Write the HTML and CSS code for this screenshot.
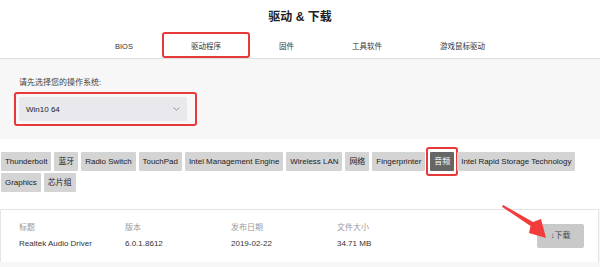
FILE: index.html
```html
<!DOCTYPE html>
<html lang="zh-CN">
<head>
<meta charset="utf-8">
<title>驱动 &amp; 下载</title>
<link rel="stylesheet" href="styles.css">
</head>
<body>
<div class="page">
  <header class="header">
    <h1 class="title">驱动 &amp; 下载</h1>
    <nav class="tabs">
      <span class="tab">BIOS</span>
      <span class="tab tab-active">驱动程序</span>
      <span class="tab">固件</span>
      <span class="tab">工具软件</span>
      <span class="tab">游戏鼠标驱动</span>
    </nav>
  </header>

  <section class="os">
    <div class="os-label">请先选择您的操作系统:</div>
    <div class="os-mark">
      <div class="select">
        <span class="select-value">Win10 64</span>
        <svg class="chev" width="7" height="4" viewBox="0 0 7 4"><polyline points="0.5,0.5 3.5,3.2 6.5,0.5" fill="none" stroke="#8a8a8a" stroke-width="0.9"/></svg>
      </div>
    </div>
  </section>

  <section class="tags">
    <span class="tag">Thunderbolt</span>
    <span class="tag">蓝牙</span>
    <span class="tag">Radio Switch</span>
    <span class="tag">TouchPad</span>
    <span class="tag">Intel Management Engine</span>
    <span class="tag">Wireless LAN</span>
    <span class="tag">网络</span>
    <span class="tag">Fingerprinter</span>
    <span class="tag tag-active">音频</span>
    <span class="tag">Intel Rapid Storage Technology</span>
    <span class="tag">Graphics</span>
    <span class="tag">芯片组</span>
  </section>

  <section class="card">
    <div class="col">
      <div class="lbl">标题</div>
      <div class="val">Realtek Audio Driver</div>
    </div>
    <div class="col">
      <div class="lbl">版本</div>
      <div class="val">6.0.1.8612</div>
    </div>
    <div class="col">
      <div class="lbl">发布日期</div>
      <div class="val">2019-02-22</div>
    </div>
    <div class="col">
      <div class="lbl">文件大小</div>
      <div class="val">34.71 MB</div>
    </div>
    <div class="btn">↓下载</div>
  </section>

  <svg class="arrow" width="50" height="40" viewBox="0 0 50 40">
    <polygon points="1.2,0 31,17 39,14 44,33 27,28 28.5,21 0,1.8" fill="#f23c3c"/>
  </svg>
</div>
</body>
</html>
```

FILE: styles.css
```css
* { box-sizing: border-box; }
html, body { margin: 0; padding: 0; }
body {
  background: #f7f7f7;
  font-family: "Liberation Sans", "Noto Sans CJK SC", sans-serif;
  color: #333;
  width: 600px;
  height: 267px;
  overflow: hidden;
}
.page { position: relative; }

.header {
  background: #fff;
  border-bottom: 1px solid #dedede;
  height: 59px;
}
.title {
  margin: 0;
  height: 32px;
  line-height: 34px;
  text-align: center;
  font-size: 12px;
  font-weight: bold;
  color: #222;
}
.tabs {
  display: flex;
  justify-content: center;
  gap: 0;
}
.tab {
  height: 26px;
  padding: 4px 27px 0;
  line-height: 18px;
  border: 2px solid transparent;
  border-radius: 3px;
  font-size: 7.5px;
  color: #333;
  white-space: nowrap;
}
.tab-active { border-color: #e8393a; }

.os {
  background: #f7f7f7;
  padding: 18px 0 13px 14px;
}
.os-label {
  margin-left: 5px;
  line-height: 12px;
  font-size: 8px;
  color: #444;
}
.os-mark {
  margin-top: 3px;
  width: 183px;
  padding: 3px 8px 3px 3px;
  border: 2px solid #e8393a;
  border-radius: 3px;
}
.select {
  height: 24px;
  background: #e9e9ed;
  border-radius: 2px;
  display: flex;
  align-items: center;
  justify-content: space-between;
  padding: 0 7px 0 7px;
}
.select-value { font-size: 8px; color: #222; }
.chev { display: block; }

.tags {
  background: #fff;
  padding: 13px 0 17px 1px;
  display: flex;
  flex-wrap: wrap;
  gap: 2px 3px;
}
.tag {
  height: 19px;
  line-height: 19px;
  padding: 0 4px;
  background: #d4d4d4;
  border-radius: 1px;
  font-size: 7.95px;
  color: #222;
  white-space: nowrap;
  position: relative;
}
.tag-active {
  background: #666;
  color: #fff;
  margin-left: 2px;
}
.tag-active::after {
  content: "";
  position: absolute;
  left: -4px;
  right: -4px;
  top: -5px;
  bottom: -5px;
  border: 2px solid #e8393a;
  border-radius: 3px;
}

.card {
  background: #fff;
  width: 599px;
  border: 1px solid #e4e4e4;
  border-bottom: none;
  height: 53px;
  display: flex;
  align-items: center;
  padding: 0 14px 0 18px;
}
.col { width: 106px; }
.lbl {
  font-size: 8px;
  line-height: 12px;
  color: #999;
}
.val {
  margin-top: 4px;
  font-size: 8px;
  line-height: 12px;
  color: #333;
}
.btn {
  margin-left: auto;
  width: 47px;
  height: 24px;
  line-height: 24px;
  text-align: center;
  background: #c9c9c9;
  border-radius: 2px;
  font-size: 8px;
  color: #444;
}

.arrow {
  position: absolute;
  left: 502px;
  top: 205px;
}
```
